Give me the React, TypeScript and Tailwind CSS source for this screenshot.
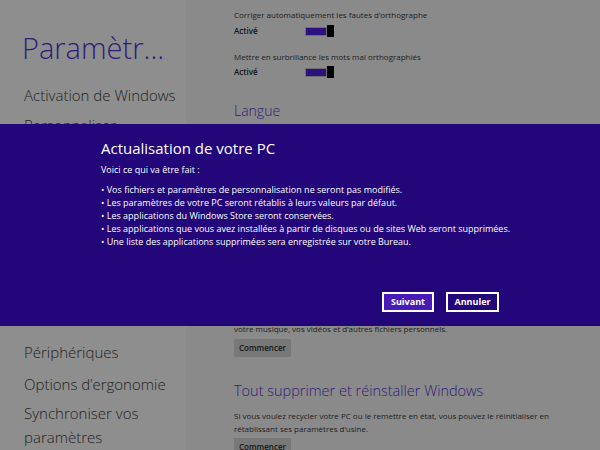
import React from "react";

const Toggle: React.FC = () => (
  <div className="flex items-center">
    <div className="w-[22px] h-[9px] border border-[#6e6e6e] bg-[#2c1280]" />
    <div className="w-[7px] h-[12px] bg-black" />
  </div>
);

const Setting: React.FC<{ label: string; gap: string }> = ({ label, gap }) => (
  <div className="flex flex-col">
    <div className="text-[8px] leading-[12px] text-[#1c1c1c]">{label}</div>
    <div className={`flex items-center ${gap}`}>
      <span className="w-[71px] text-[8px] font-semibold text-[#111]">Activé</span>
      <Toggle />
    </div>
  </div>
);

const Commencer: React.FC = () => (
  <div className="w-[57px] h-[18px] flex items-center justify-center bg-[#787878] text-[8px] font-semibold text-[#151515]">
    Commencer
  </div>
);

const App: React.FC = () => {
  const bullets = [
    "Vos fichiers et paramètres de personnalisation ne seront pas modifiés.",
    "Les paramètres de votre PC seront rétablis à leurs valeurs par défaut.",
    "Les applications du Windows Store seront conservées.",
    "Les applications que vous avez installées à partir de disques ou de sites Web seront supprimées.",
    "Une liste des applications supprimées sera enregistrée sur votre Bureau.",
  ];

  return (
    <div
      className="relative w-[600px] h-[450px] overflow-hidden flex bg-[#8a8a8a]"
      style={{ fontFamily: '"Open Sans", "Noto Sans", sans-serif' }}
    >
      {/* left nav */}
      <div className="w-[186px] shrink-0 bg-[#8e8e8e] pl-[22px] pt-[30px] text-[#1e1e1e]">
        <div className="text-[29px] font-light leading-[36px] text-[#2e1c78]">Paramètr...</div>
        <div className="mt-[18px] pl-[2px] flex flex-col gap-[8px] text-[15px] font-light leading-[22px]">
          <div>Activation de Windows</div>
          <div>Personnaliser</div>
        </div>
        <div className="mt-[204px] pl-[2px] flex flex-col text-[15px] font-light leading-[24px]">
          <div>Périphériques</div>
          <div className="mt-[8px]">Options d’ergonomie</div>
          <div className="mt-[5px]">Synchroniser vos paramètres</div>
        </div>
      </div>

      {/* right content */}
      <div className="flex-1 pl-[48px] pt-[9px]">
        <Setting label="Corriger automatiquement les fautes d’orthographe" gap="mt-[4px]" />
        <div className="mt-[14px]">
          <Setting label="Mettre en surbrillance les mots mal orthographiés" gap="mt-[3px]" />
        </div>
        <div className="mt-[23px] text-[14px] font-light leading-[20px] text-[#2e1c78]">Langue</div>
        <div className="mt-[202px] text-[8px] leading-[12px] text-[#1c1c1c]">
          votre musique, vos vidéos et d’autres fichiers personnels.
        </div>
        <div className="mt-[4px]">
          <Commencer />
        </div>
        <div className="mt-[24px] text-[14.5px] font-light leading-[20px] text-[#2e1c78]">
          Tout supprimer et réinstaller Windows
        </div>
        <div className="mt-[8px] text-[8px] leading-[13px] text-[#1c1c1c] w-[330px]">
          Si vous voulez recycler votre PC ou le remettre en état, vous pouvez le réinitialiser en
          rétablissant ses paramètres d’usine.
        </div>
        <div className="mt-[3px]">
          <Commencer />
        </div>
      </div>

      {/* modal band */}
      <div className="absolute left-0 right-0 top-[124px] h-[202px] bg-[#22067a] text-white">
        <div className="pl-[101px] pr-[101px] pt-[13px] flex flex-col">
          <div className="text-[15px] leading-[22px]">Actualisation de votre PC</div>
          <div className="mt-[5px] text-[9px] leading-[12px]">Voici ce qui va être fait :</div>
          <ul className="mt-[7px] flex flex-col text-[9px] leading-[13px] whitespace-nowrap">
            {bullets.map((b) => (
              <li key={b}>• {b}</li>
            ))}
          </ul>
          <div className="mt-[44px] flex justify-end gap-[12px]">
            <button className="w-[52px] h-[20px] border-2 border-white bg-[#4a1ab8] text-[9px] font-bold">
              Suivant
            </button>
            <button className="w-[53px] h-[20px] border-2 border-white bg-[#22067a] text-[9px] font-bold">
              Annuler
            </button>
          </div>
        </div>
      </div>
    </div>
  );
};

export default App;
